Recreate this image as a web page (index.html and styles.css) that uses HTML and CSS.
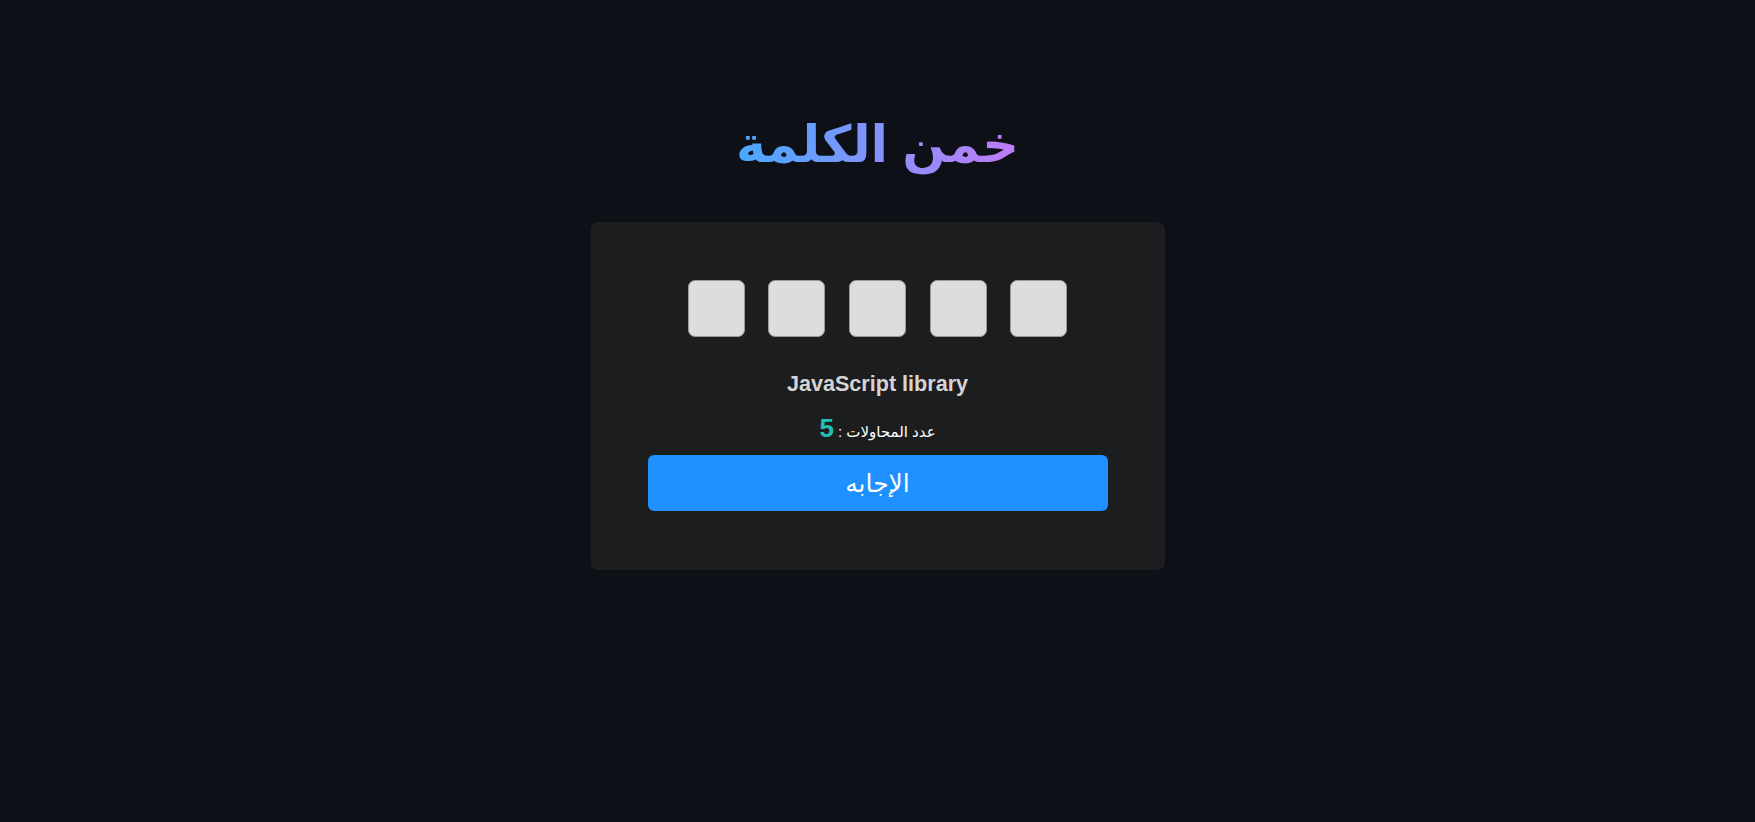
FILE: index.html
```html
<!DOCTYPE html>
<html lang="ar" dir="rtl">
<head>
<meta charset="utf-8">
<title>خمن الكلمة</title>
<link rel="stylesheet" href="styles.css">
</head>
<body>
<main class="page">
  <h1 class="title">خمن الكلمة</h1>
  <section class="card">
    <div class="letters">
      <input class="letter" type="text" maxlength="1">
      <input class="letter" type="text" maxlength="1">
      <input class="letter" type="text" maxlength="1">
      <input class="letter" type="text" maxlength="1">
      <input class="letter" type="text" maxlength="1">
    </div>
    <p class="hint" dir="ltr">JavaScript library</p>
    <p class="tries">عدد المحاولات : <span class="count">5</span></p>
    <button class="answer" type="button">الإجابه</button>
  </section>
</main>
</body>
</html>
```

FILE: styles.css
```css
* {
  box-sizing: border-box;
}

html, body {
  margin: 0;
  padding: 0;
}

body {
  background: #0d1017;
  font-family: "Liberation Sans", Arial, "DejaVu Sans", sans-serif;
  color: #e6e6e6;
  min-height: 822px;
}

.page {
  display: flex;
  flex-direction: column;
  align-items: center;
}

.title {
  margin: 0;
  padding-top: 108px;
  font-size: 51px;
  line-height: 74px;
  font-weight: bold;
  background: linear-gradient(to right, #48a9ff, #c27bf7);
  -webkit-background-clip: text;
  background-clip: text;
  color: transparent;
}

.card {
  margin-top: 40px;
  width: 574px;
  background: #1c1d1f;
  border-radius: 7px;
  padding: 58px 57px 59px;
  display: flex;
  flex-direction: column;
  align-items: center;
}

.letters {
  display: flex;
  gap: 23.7px;
  direction: ltr;
}

.letter {
  width: 57px;
  height: 57px;
  border: 1px solid #9a9a9a;
  border-radius: 7px;
  background: #dddddd;
  outline: none;
  padding: 0;
}

.hint {
  margin: 35px 0 0;
  font-size: 21.6px;
  line-height: 24px;
  font-weight: bold;
  color: #d4d4d4;
}

.tries {
  margin: 17px 0 0;
  font-size: 15px;
  line-height: 30px;
  color: #ffffff;
}

.count {
  font-size: 26px;
  font-weight: bold;
  color: #22c1b6;
}

.answer {
  margin-top: 8px;
  width: 100%;
  height: 56px;
  border: none;
  border-radius: 6px;
  background: #1e90ff;
  color: #ffffff;
  font-family: inherit;
  font-size: 25px;
  font-weight: normal;
}
```
